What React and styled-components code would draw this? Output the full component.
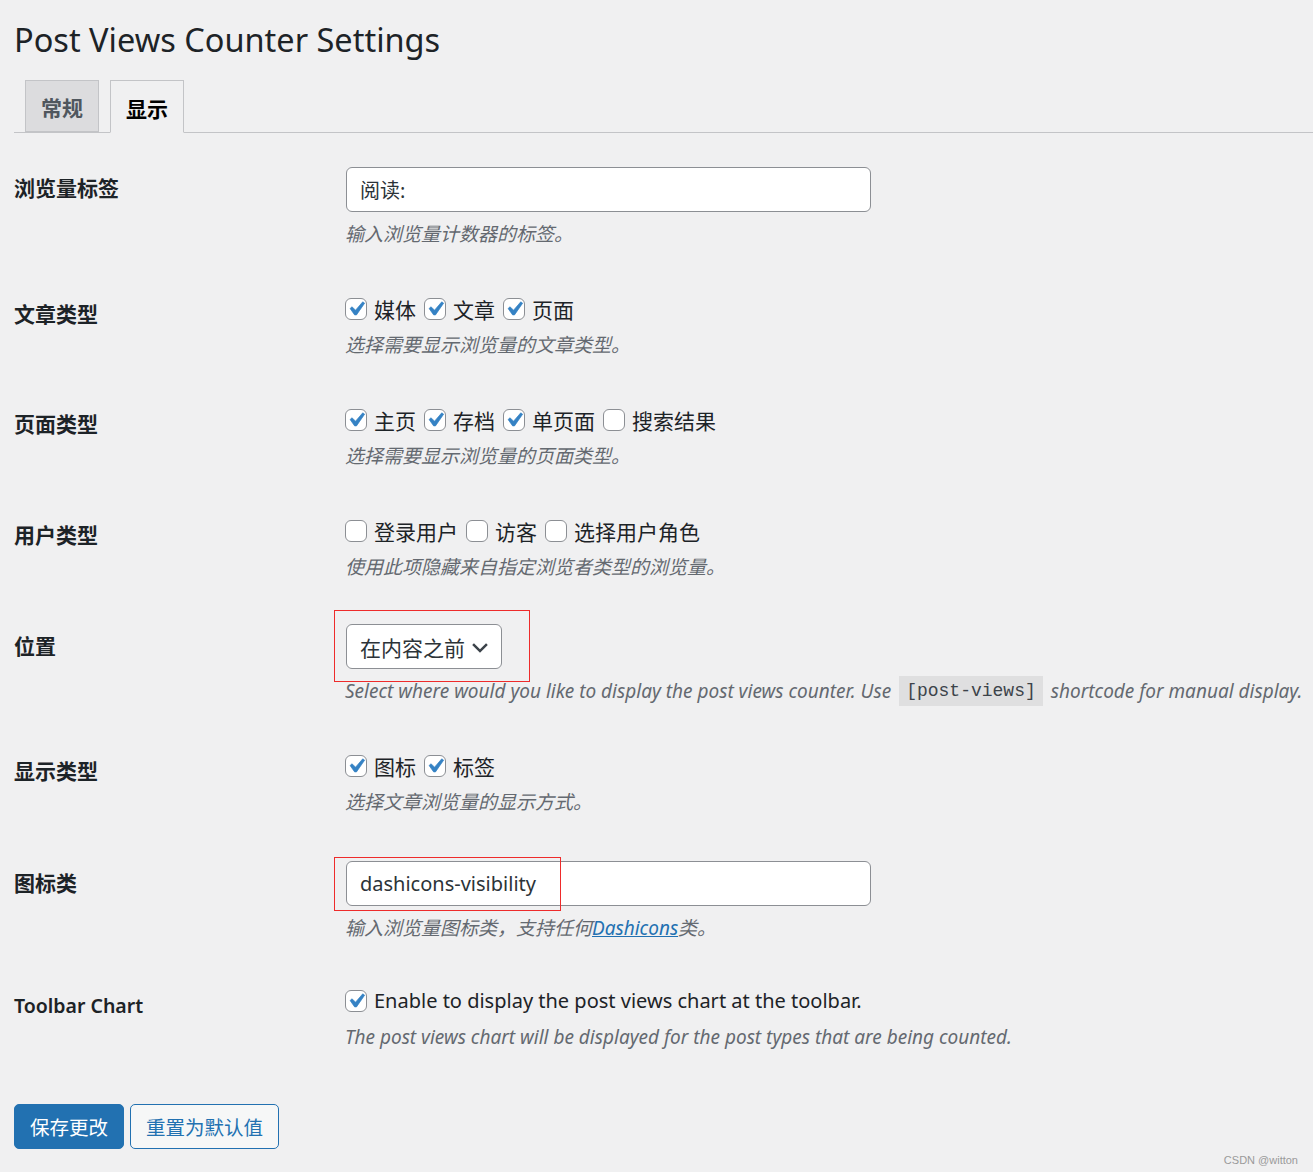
import React from 'react';
import styled, { createGlobalStyle } from 'styled-components';

const GlobalStyle = createGlobalStyle`
  html, body {
    margin: 0;
    padding: 0;
    background: #f0f0f1;
  }
  body {
    font-family: "Noto Sans", "Noto Sans CJK SC", sans-serif;
    color: #1d2327;
    min-height: 1172px;
  }
`;

const Wrap = styled.div`
  padding: 0 0 0 14px;
  min-height: 1172px;
  box-sizing: border-box;
  position: relative;
`;

const Title = styled.h1`
  margin: 0;
  padding-top: 17px;
  font-size: 32.5px;
  font-weight: 400;
  line-height: 46px;
  color: #1d2327;
`;

const TabBar = styled.div`
  margin-top: 17px;
  display: flex;
  gap: 11px;
  padding-left: 11px;
  border-bottom: 1px solid #c3c4c7;
  height: 53px;
  box-sizing: border-box;
`;

const Tab = styled.div`
  width: 74px;
  height: ${p => (p.$active ? 53 : 52)}px;
  box-sizing: border-box;
  border: 1px solid #c3c4c7;
  border-bottom-color: ${p => (p.$active ? '#f0f0f1' : '#c3c4c7')};
  background: ${p => (p.$active ? '#f0f0f1' : '#dcdcde')};
  color: ${p => (p.$active ? '#000' : '#50575e')};
  font-weight: 700;
  font-size: 21px;
  display: flex;
  align-items: center;
  justify-content: center;
  padding-top: 2px;
`;

const Form = styled.div`
  margin-top: 13px;
`;

const Row = styled.div`
  display: grid;
  grid-template-columns: 331px 1fr;
  padding: 21px 0 ${p => p.$pb ?? 21}px;
`;

const Label = styled.div`
  font-weight: 700;
  font-size: 21px;
  line-height: 28px;
  padding-top: ${p => p.$top ?? 9}px;
  color: #1d2327;
`;

const PlainLabel = styled(Label)`
  font-weight: 600;
  font-size: 19.5px;
`;

const Field = styled.div`
  display: flex;
  flex-direction: column;
  align-items: flex-start;
`;

const TextInput = styled.div`
  width: 525px;
  height: 45px;
  box-sizing: border-box;
  background: #fff;
  border: 1px solid #8c8f94;
  border-radius: 6px;
  padding: 0 13px;
  display: flex;
  align-items: center;
  font-size: 20px;
  color: #2c3338;
  margin-left: 1px;
  position: relative;
`;

const Desc = styled.div`
  font-style: italic;
  font-size: 19px;
  line-height: 30px;
  color: #646970;
  margin-top: ${p => p.$gap ?? 0}px;
  white-space: nowrap;
  display: flex;
  align-items: center;
`;

const Code = styled.code`
  font-style: normal;
  font-family: "Liberation Mono", "DejaVu Sans Mono", monospace;
  font-size: 18px;
  line-height: 30px;
  background: rgba(0, 0, 0, 0.07);
  color: #3c434a;
  padding: 0 7px;
  margin: 0 8px;
`;

const Link = styled.a`
  color: #2271b1;
  text-decoration: underline;
`;

const Checks = styled.div`
  display: flex;
  align-items: center;
  height: 39px;
  box-sizing: border-box;
  padding-bottom: 4px;
  gap: 8px;
`;

const CheckItem = styled.label`
  display: flex;
  align-items: center;
  gap: 7px;
  font-size: ${p => p.$size ?? 21}px;
  color: #1d2327;
`;

const Box = styled.span`
  width: 22px;
  height: 22px;
  box-sizing: border-box;
  border: 1px solid #8c8f94;
  border-radius: 6px;
  background: #fff;
  display: flex;
  align-items: center;
  justify-content: center;
  overflow: visible;

  svg {
    flex: none;
    margin: -4px;
  }
`;

const SelectBox = styled.div`
  height: 45px;
  width: 156px;
  box-sizing: border-box;
  border: 1px solid #8c8f94;
  border-radius: 6px;
  background: #fff;
  margin-left: 1px;
  padding: 0 10px 0 13px;
  display: flex;
  align-items: center;
  justify-content: space-between;
  font-size: 21px;
  color: #2c3338;
  position: relative;
`;

const Marker = styled.span`
  position: absolute;
  border: 1px solid #ee2b2b;
  pointer-events: none;
`;

const Actions = styled.div`
  display: flex;
  gap: 6px;
  margin-top: 31px;
`;

const Button = styled.button`
  height: 45px;
  box-sizing: border-box;
  border-radius: 5px;
  border: 1px solid #2271b1;
  background: ${p => (p.$primary ? '#2271b1' : '#f6f7f7')};
  color: ${p => (p.$primary ? '#fff' : '#2271b1')};
  font-family: inherit;
  font-size: 19.5px;
  padding: 0 15px;
`;

const Watermark = styled.div`
  position: absolute;
  right: 15px;
  bottom: 6px;
  font-size: 11px;
  color: #9a9a9a;
  font-family: "Liberation Sans", sans-serif;
`;

const Check = ({ on }) => (
  <Box>
    {on && (
      <svg width="28" height="28" viewBox="0 0 20 20">
        <path
          d="M14.83 4.89l1.34.94-5.81 8.38H9.02L5.78 9.67l1.34-1.25 2.57 2.4z"
          fill="#3582c4"
          stroke="#3582c4"
          strokeWidth="0.5"
          strokeLinejoin="round"
        />
      </svg>
    )}
  </Box>
);

const CheckGroup = ({ items, size }) => (
  <Checks>
    {items.map(([text, on]) => (
      <CheckItem key={text} $size={size}>
        <Check on={on} />
        {text}
      </CheckItem>
    ))}
  </Checks>
);

export default function App() {
  return (
    <>
      <GlobalStyle />
      <Wrap>
        <Title>Post Views Counter Settings</Title>
        <TabBar>
          <Tab>常规</Tab>
          <Tab $active>显示</Tab>
        </TabBar>
        <Form>
          <Row>
            <Label $top={7}>浏览量标签</Label>
            <Field>
              <TextInput>阅读:</TextInput>
              <Desc $gap={7}>输入浏览量计数器的标签。</Desc>
            </Field>
          </Row>
          <Row>
            <Label $top={9}>文章类型</Label>
            <Field>
              <CheckGroup items={[['媒体', true], ['文章', true], ['页面', true]]} />
              <Desc>选择需要显示浏览量的文章类型。</Desc>
            </Field>
          </Row>
          <Row>
            <Label $top={8}>页面类型</Label>
            <Field>
              <CheckGroup items={[['主页', true], ['存档', true], ['单页面', true], ['搜索结果', false]]} />
              <Desc>选择需要显示浏览量的页面类型。</Desc>
            </Field>
          </Row>
          <Row>
            <Label $top={8}>用户类型</Label>
            <Field>
              <CheckGroup items={[['登录用户', false], ['访客', false], ['选择用户角色', false]]} />
              <Desc>使用此项隐藏来自指定浏览者类型的浏览量。</Desc>
            </Field>
          </Row>
          <Row>
            <Label $top={8}>位置</Label>
            <Field>
              <SelectBox>
                在内容之前
                <svg width="22" height="22" viewBox="0 0 20 20">
                  <path d="M4.5 6.5l5.5 5.5 5.5-5.5 1.6 1.6-7.1 7.1-7.1-7.1z" fill="#3c434a" />
                </svg>
                <Marker style={{ left: -13, top: -15, width: 194, height: 70 }} />
              </SelectBox>
              <Desc $gap={7}>
                Select where would you like to display the post views counter. Use
                <Code>[post-views]</Code>
                shortcode for manual display.
              </Desc>
            </Field>
          </Row>
          <Row $pb={23}>
            <Label $top={9}>显示类型</Label>
            <Field>
              <CheckGroup items={[['图标', true], ['标签', true]]} />
              <Desc>选择文章浏览量的显示方式。</Desc>
            </Field>
          </Row>
          <Row $pb={19}>
            <Label $top={8}>图标类</Label>
            <Field>
              <TextInput>
                dashicons-visibility
                <Marker style={{ left: -13, top: -5, width: 225, height: 52 }} />
              </TextInput>
              <Desc $gap={7}>
                输入浏览量图标类，支持任何<Link>Dashicons</Link>类。
              </Desc>
            </Field>
          </Row>
          <Row>
            <PlainLabel $top={9}>Toolbar Chart</PlainLabel>
            <Field>
              <CheckGroup size={20} items={[['Enable to display the post views chart at the toolbar.', true]]} />
              <Desc>The post views chart will be displayed for the post types that are being counted.</Desc>
            </Field>
          </Row>
        </Form>
        <Actions>
          <Button $primary>保存更改</Button>
          <Button>重置为默认值</Button>
        </Actions>
        <Watermark>CSDN @witton</Watermark>
      </Wrap>
    </>
  );
}
